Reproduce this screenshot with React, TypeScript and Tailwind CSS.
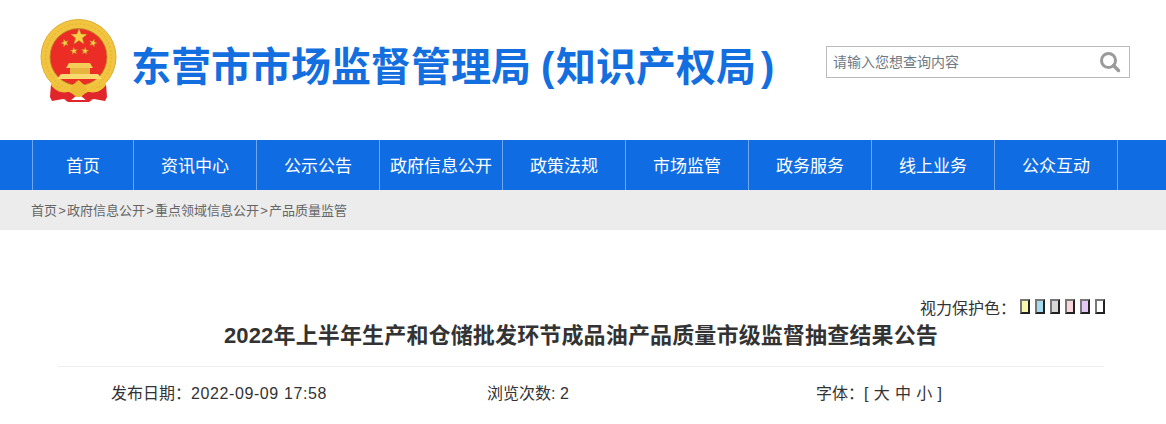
const cjk = "font-['Liberation_Sans','Noto_Sans_CJK_SC',sans-serif]";

const navItems = [
  { label: "首页", width: "w-[101px]" },
  { label: "资讯中心", width: "w-[123px]" },
  { label: "公示公告", width: "w-[123px]" },
  { label: "政府信息公开", width: "w-[123px]" },
  { label: "政策法规", width: "w-[123px]" },
  { label: "市场监管", width: "w-[123px]" },
  { label: "政务服务", width: "w-[123px]" },
  { label: "线上业务", width: "w-[123px]" },
  { label: "公众互动", width: "w-[123px]" },
];

const crumbs = ["首页", "政府信息公开", "重点领域信息公开", "产品质量监管"];

const swatches = [
  "bg-[#fbf8b0]",
  "bg-[#a5dcf2]",
  "bg-[#d8d8d8]",
  "bg-[#fbd6dd]",
  "bg-[#e2c8f2]",
  "bg-white",
];

function Star({ x, y, r, rot = 0 }: { x: number; y: number; r: number; rot?: number }) {
  const pts: string[] = [];
  for (let i = 0; i < 10; i++) {
    const rad = i % 2 === 0 ? r : r * 0.42;
    const a = ((-90 + i * 36 + rot) * Math.PI) / 180;
    pts.push(`${(x + rad * Math.cos(a)).toFixed(2)},${(y + rad * Math.sin(a)).toFixed(2)}`);
  }
  return <polygon points={pts.join(" ")} fill="#f8d048" stroke="#b98a2a" strokeWidth="0.4" />;
}

function Emblem() {
  return (
    <svg width="84" height="88" viewBox="0 0 84 88" className="shrink-0">
      {/* ring */}
      <circle cx="40.5" cy="41" r="37.5" fill="#f1c540" stroke="#e3ab30" strokeWidth="1" />
      <circle cx="40.5" cy="41" r="33" fill="none" stroke="#e9b636" strokeWidth="1.5" strokeDasharray="2 2" />
      <circle cx="40.5" cy="41" r="28.5" fill="#ec2d25" stroke="#b9892b" strokeWidth="0.8" />
      {/* stars */}
      <Star x={41} y={21} r={8.5} />
      <Star x={27} y={27} r={3.9} rot={-18} />
      <Star x={55} y={27} r={3.9} rot={18} />
      <Star x={36} y={35} r={3.7} rot={-8} />
      <Star x={47} y={35} r={3.7} rot={8} />
      {/* gate */}
      <path d="M31 47 H52 L55 52 H28 Z" fill="#f3cd58" />
      <rect x="32" y="52" width="20" height="6" fill="#e8b440" />
      <path d="M19 63 L23 58 H60 L64 63 Z" fill="#f8da70" />
      {/* ribbons */}
      <path d="M13 68 L12 81 L14 85 L25 83 L32 85 L38 80 L28 74 Z" fill="#e1262b" />
      <path d="M68 68 L69 81 L67 85 L56 83 L49 85 L43 80 L53 74 Z" fill="#e1262b" />
      {/* swag */}
      <path d="M13 65 C 19 74, 29 74, 40.5 65 C 52 74, 62 74, 68 65 L 68 69 C 61 79, 50 78, 40.5 71 C 31 78, 20 79, 13 69 Z" fill="#f1c33c" />
      <path d="M32 74 Q36 67 40.5 64 Q45 67 49 74 Q45 80 42 81 H39 Q36 80 32 74 Z" fill="#edbb34" />
      <path d="M27 84 H54 L51 86 H30 Z" fill="#e1262b" />
    </svg>
  );
}

function SearchGlyph() {
  return (
    <svg width="22" height="22" viewBox="0 0 22 22" className="shrink-0">
      <circle cx="9.5" cy="9.5" r="7" fill="none" stroke="#9a9a9a" strokeWidth="3" />
      <path d="M14.5 14.5 L19.5 19.5" stroke="#9a9a9a" strokeWidth="3.4" strokeLinecap="round" />
    </svg>
  );
}

export default function App() {
  return (
    <div className={`w-[1166px] h-[424px] overflow-hidden bg-white ${cjk}`}>
      {/* Header */}
      <div className="h-[140px] flex items-start pl-[38px] pr-[36px]">
        <div className="mt-[16px]">
          <Emblem />
        </div>
        <h1 className="ml-[9px] mt-[46px] text-[40px] leading-[42px] font-bold text-[#136ee0] whitespace-nowrap flex">
          <span>东营市市场监督管理局</span>
          <span className="ml-[10px] w-[15px]">(</span>
          <span>知识产权局</span>
          <span className="ml-[5px] w-[16px]">)</span>
        </h1>
        <div className="ml-auto mt-[46px] w-[304px] h-[32px] border border-[#bbbbbb] flex items-center justify-between pl-[6px] pr-[8px]">
          <span className="text-[14px] text-[#6f7a85]">请输入您想查询内容</span>
          <SearchGlyph />
        </div>
      </div>

      {/* Nav */}
      <div className="h-[50px] bg-[#0f6ce2] pl-[32px] flex">
        {navItems.map((item) => (
          <div
            key={item.label}
            className={`${item.width} h-full pt-[3px] border-l border-[#6fa8ee] last:w-[124px] last:border-r flex items-center justify-center text-white text-[17px] whitespace-nowrap`}
          >
            {item.label}
          </div>
        ))}
      </div>

      {/* Breadcrumb */}
      <div className="h-[40px] pt-[1px] bg-[#ececec] pl-[31px] flex items-center text-[13px] text-[#666666]">
        {crumbs.map((c, i) => (
          <span key={c} className="flex">
            {i > 0 && <span className="w-[10px] text-center">&gt;</span>}
            {c}
          </span>
        ))}
      </div>

      {/* Article head */}
      <div className="pl-[58px] pr-[62px] pt-[67px]">
        <div className="flex items-center justify-end h-[22px] text-[#333333] text-[16px]">
          <span className="mr-[4px] mt-[1px]">视力保护色：</span>
          <div className="flex gap-[5px] mr-[-1px] mb-[3px]">
            {swatches.map((c) => (
              <span key={c} className={`w-[10px] h-[15px] border-2 border-t-[#777777] border-l-[#777777] border-r-[#222222] border-b-[#222222] ${c}`} />
            ))}
          </div>
        </div>
        <h2 className="mt-[2px] text-center text-[22px] leading-[30px] font-bold text-[#333333] whitespace-nowrap tracking-[0.15px]">
          2022年上半年生产和仓储批发环节成品油产品质量市级监督抽查结果公告
        </h2>
        <div className="mt-[15px] border-t border-[#eeeeee] h-[54px] flex items-center text-[16px] text-[#333333] whitespace-nowrap">
          <span className="ml-[53px] w-[376px]">
            发布日期：<span className="tracking-[0.6px]">2022-09-09 17:58</span>
          </span>
          <span className="w-[329px]">浏览次数: 2</span>
          <span>
            字体：<span className="tracking-[0.4px]">[ 大 中 小 ]</span>
          </span>
        </div>
      </div>
    </div>
  );
}
